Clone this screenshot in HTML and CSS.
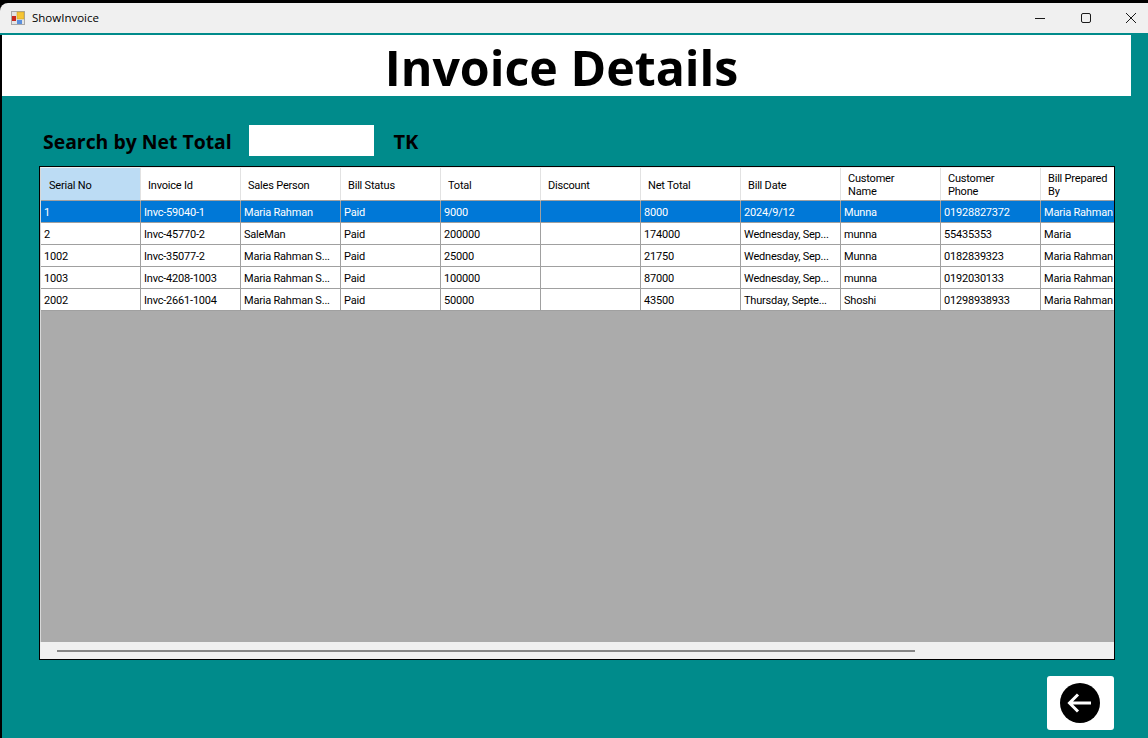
FILE: index.html
```html
<!DOCTYPE html>
<html lang="en">
<head>
    <meta charset="UTF-8">
    <meta name="viewport" content="width=device-width, initial-scale=1.0">
    <title>ShowInvoice</title>
    <link rel="stylesheet" href="styles.css">
</head>
<body>
<div class="window">

    <div class="titlebar">
        <svg class="app-icon" width="14" height="14" viewBox="0 0 14 14">
            <rect x="0.5" y="0.5" width="13" height="13" fill="#e4e4e4" stroke="#a8a8a8"/>
            <rect x="6" y="1" width="7" height="7" fill="#f6c534" stroke="#c79a20" stroke-width="0.5"/>
            <rect x="1" y="5" width="4" height="5" fill="#c8281e"/>
            <rect x="6" y="9" width="5" height="4" fill="#5b8fdc"/>
        </svg>
        <span class="app-name">ShowInvoice</span>
        <div class="window-controls">
            <svg width="12" height="12" viewBox="0 0 12 12"><path d="M1 6.5h10" stroke="#1a1a1a" stroke-width="1"/></svg>
            <svg width="12" height="12" viewBox="0 0 12 12"><rect x="1.5" y="1.5" width="9" height="9" rx="1.5" fill="none" stroke="#1a1a1a"/></svg>
            <svg width="12" height="12" viewBox="0 0 12 12"><path d="M1 1l10 10M11 1L1 11" stroke="#1a1a1a" stroke-width="1"/></svg>
        </div>
    </div>

    <div class="content">
        <h1 class="heading">Invoice Details</h1>

        <div class="search-row">
            <label class="search-label" for="netTotal">Search by Net Total</label>
            <input class="search-input" type="text" id="netTotal">
            <span class="search-unit">TK</span>
        </div>

        <div class="grid-box">
            <div class="grid-view">
                <table class="grid">
                    <thead>
                        <tr>
                            <th class="current">Serial No</th>
                            <th>Invoice Id</th>
                            <th>Sales Person</th>
                            <th>Bill Status</th>
                            <th>Total</th>
                            <th>Discount</th>
                            <th>Net Total</th>
                            <th>Bill Date</th>
                            <th class="two-line">Customer<br>Name</th>
                            <th class="two-line">Customer<br>Phone</th>
                            <th class="two-line">Bill Prepared<br>By</th>
                        </tr>
                    </thead>
                    <tbody>
                        <tr class="selected">
                            <td>1</td><td>Invc-59040-1</td><td>Maria Rahman</td><td>Paid</td><td>9000</td><td></td><td>8000</td><td>2024/9/12</td><td>Munna</td><td>01928827372</td><td>Maria Rahman</td>
                        </tr>
                        <tr>
                            <td>2</td><td>Invc-45770-2</td><td>SaleMan</td><td>Paid</td><td>200000</td><td></td><td>174000</td><td>Wednesday, Sep...</td><td>munna</td><td>55435353</td><td>Maria</td>
                        </tr>
                        <tr>
                            <td>1002</td><td>Invc-35077-2</td><td>Maria Rahman S...</td><td>Paid</td><td>25000</td><td></td><td>21750</td><td>Wednesday, Sep...</td><td>Munna</td><td>0182839323</td><td>Maria Rahman</td>
                        </tr>
                        <tr>
                            <td>1003</td><td>Invc-4208-1003</td><td>Maria Rahman S...</td><td>Paid</td><td>100000</td><td></td><td>87000</td><td>Wednesday, Sep...</td><td>munna</td><td>0192030133</td><td>Maria Rahman</td>
                        </tr>
                        <tr>
                            <td>2002</td><td>Invc-2661-1004</td><td>Maria Rahman S...</td><td>Paid</td><td>50000</td><td></td><td>43500</td><td>Thursday, Septe...</td><td>Shoshi</td><td>01298938933</td><td>Maria Rahman</td>
                        </tr>
                    </tbody>
                </table>
            </div>
            <div class="hscroll"><div class="hscroll-thumb"></div></div>
        </div>

        <div class="footer">
            <button class="back-button" type="button" aria-label="Back">
                <svg class="back-icon" width="40" height="40" viewBox="0 0 40 40">
                    <circle cx="20" cy="20" r="20" fill="#000"/>
                    <path d="M31 20H10M18 11.5L9.5 20l8.5 8.5" fill="none" stroke="#fff" stroke-width="3"/>
                </svg>
            </button>
        </div>
    </div>

</div>
</body>
</html>
```

FILE: styles.css
```css
html, body { margin: 0; padding: 0; }
body { font-family: "Open Sans", "Noto Sans", sans-serif; background: #008b8b; }

.window { width: 1148px; height: 738px; display: flex; flex-direction: column; overflow: hidden; background: #000; }

.titlebar { height: 30px; margin-top: 3px; flex-shrink: 0; display: flex; align-items: center; padding-left: 11px; background: #f0f0f0; border-top-left-radius: 8px; border-bottom: 2px solid #008b8b; }
.app-icon { margin-right: 7px; }
.app-name { margin-bottom: 2px; font-family: "Open Sans", sans-serif; font-size: 11.5px; color: #000; }
.window-controls { margin-left: auto; display: flex; gap: 33.5px; padding-right: 11px; }

.content { flex: 1; margin-left: 1.5px; display: flex; flex-direction: column; background: #008b8b; }

.heading { margin: 0 17px 0 0.5px; height: 61px; box-sizing: border-box; padding: 3px 10px 0 0; background: #fff; text-align: center; font-size: 48.3px; line-height: 58px; font-weight: 700; color: #000; }

.search-row { height: 31px; margin: 29px 0 10px 41.5px; display: flex; align-items: center; }
.search-label { width: 205.5px; padding-top: 2px; font-size: 19.4px; font-weight: 700; color: #000; }
.search-input { width: 125px; height: 31px; box-sizing: border-box; padding: 0; border: 0; background: #fff; }
.search-unit { margin-left: 20px; padding-top: 2px; font-size: 20px; font-weight: 700; color: #000; }

.grid-box { width: 1076px; height: 494px; box-sizing: border-box; margin-left: 37.5px; display: flex; flex-direction: column; border: 1px solid #000; background: #f0f0f0; }
.grid-view { flex: 1; overflow: hidden; background: #ababab; border-top: 1px solid #f0f0f0; border-left: 1px solid #d8d8d8; }
.grid { table-layout: fixed; width: 1100px; border-collapse: separate; border-spacing: 0; font-family: Roboto, "Liberation Sans", sans-serif; font-size: 11px; letter-spacing: -0.2px; color: #000; }
.grid th, .grid td { width: 100px; box-sizing: border-box; text-align: left; font-weight: 400; white-space: nowrap; vertical-align: middle; }
.grid th { height: 33px; padding: 3px 0 0 7px; line-height: 13px; background: #fff; border-right: 1px solid #e2e2e2; border-bottom: 1px solid #a0a0a0; }
.grid th.two-line { padding-top: 1px; }
.grid th.current { background: #bcdcf4; padding-left: 8px; }
.grid td { height: 22px; padding: 1px 0 0 3px; background: #fff; border-right: 1px solid #a0a0a0; border-bottom: 1px solid #a0a0a0; }
.grid .selected td { background: #0078d7; color: #fff; }

.hscroll { height: 17px; flex-shrink: 0; display: flex; align-items: center; padding-left: 17px; background: #f0f0f0; }
.hscroll-thumb { width: 858px; height: 2px; background: #858585; }

.footer { display: flex; justify-content: flex-end; padding: 16px 34px 0 0; }
.back-button { width: 67px; height: 54px; padding: 0; border: 0; border-radius: 3px; background: #fff; display: flex; align-items: center; justify-content: center; cursor: pointer; }
.back-icon { margin-right: 1px; }
```
